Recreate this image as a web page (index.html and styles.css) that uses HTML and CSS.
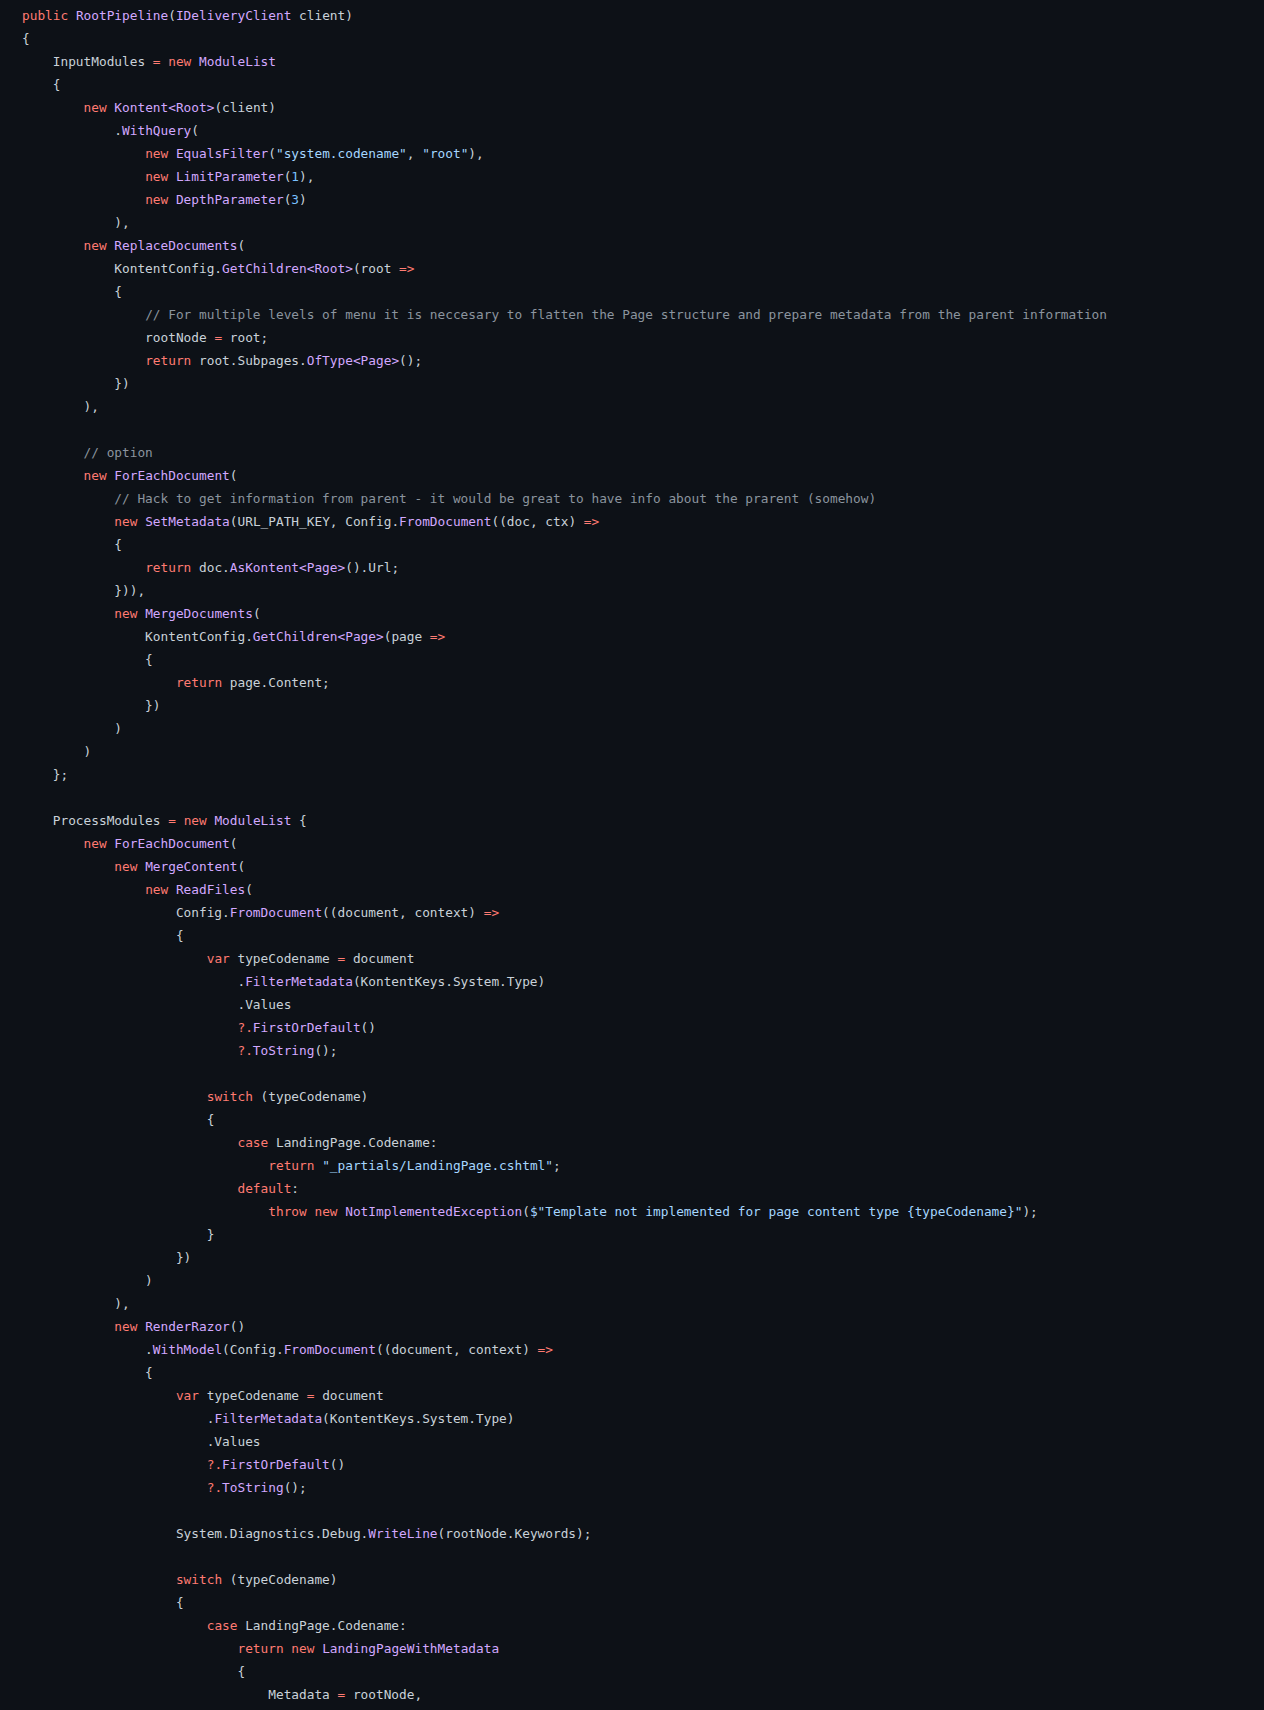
FILE: index.html
```html
<!DOCTYPE html>
<html lang="en">
<head>
<meta charset="utf-8">
<title>RootPipeline</title>
<link rel="stylesheet" href="styles.css">
</head>
<body>
<div class="code-block">
<pre class="code"><span class="k">public</span> <span class="f">RootPipeline</span>(<span class="f">IDeliveryClient</span> client)
{
    InputModules <span class="k">=</span> <span class="k">new</span> <span class="f">ModuleList</span>
    {
        <span class="k">new</span> <span class="f">Kontent&lt;Root&gt;</span>(client)
            .<span class="f">WithQuery</span>(
                <span class="k">new</span> <span class="f">EqualsFilter</span>(<span class="s">"system.codename"</span>, <span class="s">"root"</span>),
                <span class="k">new</span> <span class="f">LimitParameter</span>(<span class="n">1</span>),
                <span class="k">new</span> <span class="f">DepthParameter</span>(<span class="n">3</span>)
            ),
        <span class="k">new</span> <span class="f">ReplaceDocuments</span>(
            KontentConfig.<span class="f">GetChildren&lt;Root&gt;</span>(root <span class="k">=&gt;</span>
            {
                <span class="c">// For multiple levels of menu it is neccesary to flatten the Page structure and prepare metadata from the parent information</span>
                rootNode <span class="k">=</span> root;
                <span class="k">return</span> root.Subpages.<span class="f">OfType&lt;Page&gt;</span>();
            })
        ),

        <span class="c">// option</span>
        <span class="k">new</span> <span class="f">ForEachDocument</span>(
            <span class="c">// Hack to get information from parent - it would be great to have info about the prarent (somehow)</span>
            <span class="k">new</span> <span class="f">SetMetadata</span>(URL_PATH_KEY, Config.<span class="f">FromDocument</span>((doc, ctx) <span class="k">=&gt;</span>
            {
                <span class="k">return</span> doc.<span class="f">AsKontent&lt;Page&gt;</span>().Url;
            })),
            <span class="k">new</span> <span class="f">MergeDocuments</span>(
                KontentConfig.<span class="f">GetChildren&lt;Page&gt;</span>(page <span class="k">=&gt;</span>
                {
                    <span class="k">return</span> page.Content;
                })
            )
        )
    };

    ProcessModules <span class="k">=</span> <span class="k">new</span> <span class="f">ModuleList</span> {
        <span class="k">new</span> <span class="f">ForEachDocument</span>(
            <span class="k">new</span> <span class="f">MergeContent</span>(
                <span class="k">new</span> <span class="f">ReadFiles</span>(
                    Config.<span class="f">FromDocument</span>((document, context) <span class="k">=&gt;</span>
                    {
                        <span class="k">var</span> typeCodename <span class="k">=</span> document
                            .<span class="f">FilterMetadata</span>(KontentKeys.System.Type)
                            .Values
                            <span class="k">?.</span><span class="f">FirstOrDefault</span>()
                            <span class="k">?.</span><span class="f">ToString</span>();

                        <span class="k">switch</span> (typeCodename)
                        {
                            <span class="k">case</span> LandingPage.Codename:
                                <span class="k">return</span> <span class="s">"_partials/LandingPage.cshtml"</span>;
                            <span class="k">default</span>:
                                <span class="k">throw</span> <span class="k">new</span> <span class="f">NotImplementedException</span>(<span class="s">$"Template not implemented for page content type {typeCodename}"</span>);
                        }
                    })
                )
            ),
            <span class="k">new</span> <span class="f">RenderRazor</span>()
                .<span class="f">WithModel</span>(Config.<span class="f">FromDocument</span>((document, context) <span class="k">=&gt;</span>
                {
                    <span class="k">var</span> typeCodename <span class="k">=</span> document
                        .<span class="f">FilterMetadata</span>(KontentKeys.System.Type)
                        .Values
                        <span class="k">?.</span><span class="f">FirstOrDefault</span>()
                        <span class="k">?.</span><span class="f">ToString</span>();

                    System.Diagnostics.Debug.<span class="f">WriteLine</span>(rootNode.Keywords);

                    <span class="k">switch</span> (typeCodename)
                    {
                        <span class="k">case</span> LandingPage.Codename:
                            <span class="k">return</span> <span class="k">new</span> <span class="f">LandingPageWithMetadata</span>
                            {
                                Metadata <span class="k">=</span> rootNode,
</pre>
</div>
</body>
</html>
```

FILE: styles.css
```css
html, body {
  margin: 0;
  padding: 0;
  background: #0d1117;
}

.code-block {
  background: #0d1117;
  padding: 4px 0 0 22px;
  min-height: 1706px;
}

.code {
  margin: 0;
  font-family: "DejaVu Sans Mono", "Liberation Mono", monospace;
  font-size: 12.79px;
  line-height: 23px;
  color: #c9d1d9;
  white-space: pre;
}

.k { color: #ff7b72; }
.f { color: #d2a8ff; }
.s { color: #a5d6ff; }
.n { color: #79c0ff; }
.c { color: #8b949e; }
```
